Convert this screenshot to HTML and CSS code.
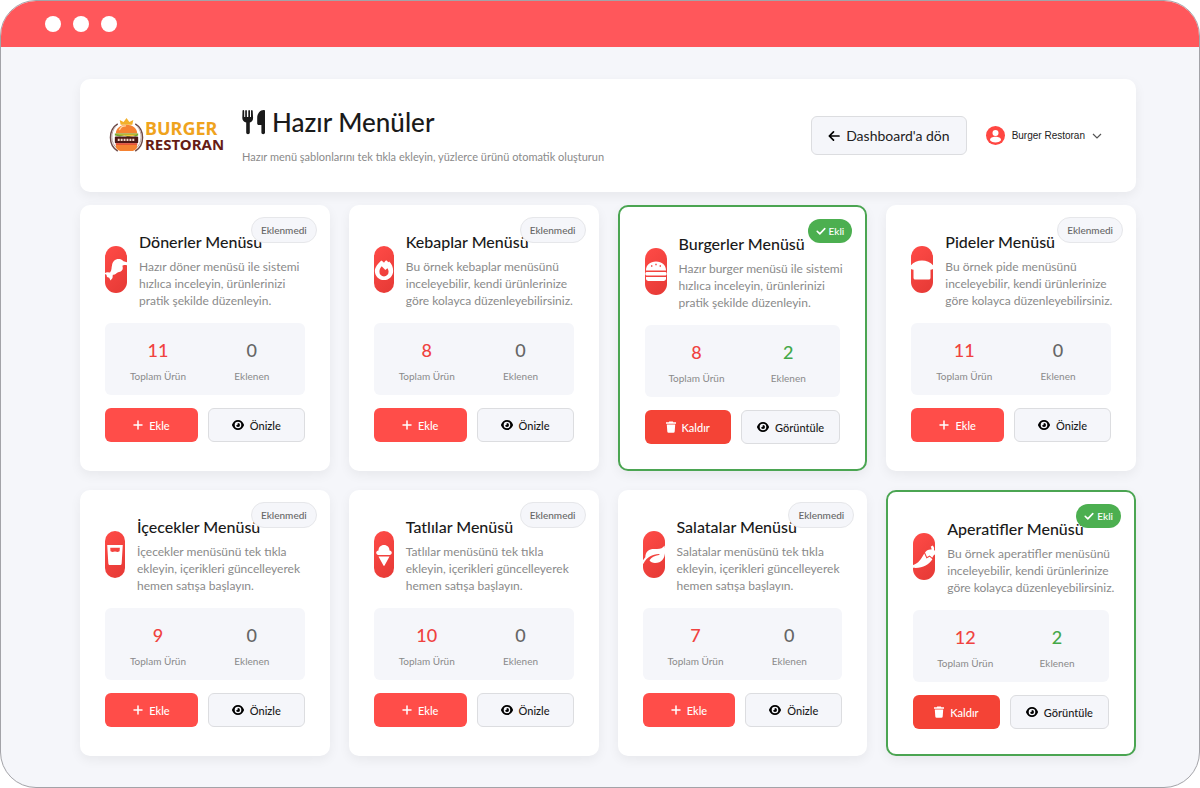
FILE: index.html
```
<!DOCTYPE html>
<html lang="tr">
<head>
    <meta charset="UTF-8">
    <meta name="viewport" content="width=device-width, initial-scale=1.0">
    <title>Hazır Menüler</title>
    <link rel="stylesheet" href="styles.css">
</head>
<body>
    <svg class="sprite" aria-hidden="true">
        <symbol id="plus" viewBox="0 0 10 10"><path d="M5 1v8M1 5h8" stroke="currentColor" stroke-width="1.5" stroke-linecap="round"/></symbol>
        <symbol id="eye" viewBox="0 0 12 12"><path fill="currentColor" fill-rule="evenodd" d="M6 1C3.200 1 1.100 3 .1 5.500a1.200 1.200 0 0 0 0 1C1.100 9 3.200 11 6 11s4.900-2 5.900-4.500a1.200 1.200 0 0 0 0-1C10.900 3 8.800 1 6 1zm0 1.700a3.300 3.300 0 1 1 0 6.600 3.300 3.300 0 0 1 0-6.600z"/><path fill="currentColor" d="M6 4a2 2 0 1 1-2 2.200c1 .3 2-.7 1.600-1.800L6 4z"/></symbol>
        <symbol id="trash" viewBox="0 0 10 12"><path fill="currentColor" d="M3.200.5h3.600l.5.800H10v1.500H0V1.300h2.700zM.8 3.500h8.400l-.5 7a1.300 1.300 0 0 1-1.300 1.200H2.600a1.300 1.300 0 0 1-1.300-1.200z"/></symbol>
        <symbol id="check" viewBox="0 0 10 10"><path d="M1.200 5.300l2.600 2.600 5-5.300" fill="none" stroke="currentColor" stroke-width="1.600" stroke-linecap="round" stroke-linejoin="round"/></symbol>
    </svg>

    <div class="window">
        <div class="titlebar">
            <span class="dot"></span>
            <span class="dot"></span>
            <span class="dot"></span>
        </div>

        <main class="content">
            <header class="page-header">
                <div class="logo">
                    <svg class="logo-mark" viewBox="0 0 36 38" aria-hidden="true">
                        <path d="M12 8 11 3l4 2 3-4 3 4 4-2-1 5z" fill="#f2b02c"/>
                        <path d="M9 7C-1 13-1 29 9 35M27 7c10 6 10 22 0 28" fill="none" stroke="#6d4a48" stroke-width="1.500"/>
                        <path d="M7 9.500C1 16 2 27 8 32M29 9.500c6 6.500 5 17.500-1 22.500" fill="none" stroke="#b9a5a3" stroke-width="1"/>
                        <path d="M7 17C7 5 29 5 29 17z" fill="#f58232"/>
                        <path d="M11 13c1-3 4-4 6-4" fill="none" stroke="#ffd9a6" stroke-width="1.300" stroke-linecap="round"/>
                        <path d="M6 17h24v2l-3 1-3-1-4 2-4-2-5 1-5-1z" fill="#74a72f"/>
                        <path d="M7 18h22l-6 2z" fill="#fac63b"/>
                        <rect x="6" y="20" width="24" height="7" rx="1" fill="#4c1815"/>
                        <path d="M9 23.500h18" fill="none" stroke="#f6ddcf" stroke-width="2.500" stroke-dasharray="2 1"/>
                        <path d="M7 28h22v2c0 3-3 5-6 5H13c-3 0-6-2-6-5z" fill="#f58232"/>
                        <path d="M7 27h22v1.500H7z" fill="#e33c26"/>
                    </svg>
                    <div class="logo-text">
                        <span class="logo-top">BURGER</span>
                        <span class="logo-bottom">RESTORAN</span>
                    </div>
                </div>
                <div class="heading">
                    <h1>
                        <svg class="cutlery" viewBox="0 0 24 26" aria-hidden="true"><path fill="currentColor" d="M1.300 1c.6 0 .9.400.9.900v6h1V2c0-1.300 1.700-1.300 1.700 0v5.900h1.400V2c0-1.300 1.700-1.300 1.700 0v5.900h1V1.900c0-1.200 1.600-1.200 1.700 0l.4 7.100c0 2.500-1.500 4-3.300 4.500v10c0 2.300-3.600 2.300-3.600 0v-10C2.100 13 .3 11.500.3 9L.5 1.900c0-.5.300-.9.800-.9zM23 1.800v21.700c0 2.200-3.600 2.200-3.600 0V16h-2.600c-1 0-1.600-.6-1.600-1.500V9c0-4.500 3-8 6.500-8 .8 0 1.300.200 1.300.8z"/></svg>
                        Hazır Menüler
                    </h1>
                    <p>Hazır menü şablonlarını tek tıkla ekleyin, yüzlerce ürünü otomatik oluşturun</p>
                </div>
                <a class="back" href="#">
                    <svg width="12" height="12" viewBox="0 0 12 12" aria-hidden="true"><path d="M11 6H1.500M5.500 1.800 1.300 6l4.200 4.200" fill="none" stroke="#000" stroke-width="1.700" stroke-linecap="round" stroke-linejoin="round"/></svg>
                    Dashboard'a dön
                </a>
                <button class="user" type="button">
                    <svg width="19" height="19" viewBox="0 0 19 19" aria-hidden="true"><circle cx="9.500" cy="9.500" r="9.500" fill="#ff4742"/><circle cx="9.500" cy="7" r="3" fill="#fff"/><path d="M4 14.200c0-2.400 2.500-3.400 5.500-3.400s5.500 1 5.500 3.400c-1.400 1.500-3.300 2.200-5.500 2.200S5.400 15.700 4 14.200z" fill="#fff"/></svg>
                    Burger Restoran
                    <svg width="10" height="6" viewBox="0 0 10 6" aria-hidden="true"><path d="M1 1l4 4 4-4" fill="none" stroke="#555" stroke-width="1.200"/></svg>
                </button>
            </header>

            <div class="menus">
                <article class="card">
                    <span class="badge">Eklenmedi</span>
                    <div class="card-head">
                        <div class="card-icon"><svg viewBox="0 0 24 24" aria-hidden="true"><path d="M0 15.300 3 14.200l3 .3C8 12 7.300 9.500 8 7.500 8.500 3.500 11 1 14.500 1c2 0 3.500.5 5 2.300L24 4.500l-1 2.700c-2 0-3.500-.6-4.600.6.600 2 .6 4-1 5.200-1.500 1.300-3.500.700-4.900 2.200-1.200 1.300-2.500 1.300-3.700 1.600L8.500 20l-2 2.500-1.300-2.800L3 19l-.5-2.200z"/></svg></div>
                        <div>
                            <h2>Dönerler Menüsü</h2>
                            <p>Hazır döner menüsü ile sistemi<br>hızlıca inceleyin, ürünlerinizi<br>pratik şekilde düzenleyin.</p>
                        </div>
                    </div>
                    <dl class="stats">
                        <div><dt>Toplam Ürün</dt><dd class="total">11</dd></div>
                        <div><dt>Eklenen</dt><dd>0</dd></div>
                    </dl>
                    <div class="actions">
                        <button class="btn add" type="button"><svg class="i-plus"><use href="#plus"/></svg>Ekle</button>
                        <button class="btn view" type="button"><svg class="i-eye"><use href="#eye"/></svg>Önizle</button>
                    </div>
                </article>

                <article class="card">
                    <span class="badge">Eklenmedi</span>
                    <div class="card-head">
                        <div class="card-icon narrow"><svg viewBox="0 0 24 24" aria-hidden="true"><path fill-rule="evenodd" d="M9 1.500c1.300.5 2.200 1.400 3 2.500.7-1.200 1.500-2 2.400-2.700 1 .6 1.700 1.400 2.300 2.300l1-.8C20.500 5.500 22 9 22 13c0 5.500-4.400 10-10 10S2 18.500 2 13c0-4 3.500-8 7-11.500zM9.500 8C8 9.800 7 11.800 7 14c0 3 2.200 5 5 5s5-2 5-5c0-1.500-.5-3-1.300-4L13.500 12z"/></svg></div>
                        <div>
                            <h2>Kebaplar Menüsü</h2>
                            <p>Bu örnek kebaplar menüsünü<br>inceleyebilir, kendi ürünlerinize<br>göre kolayca düzenleyebilirsiniz.</p>
                        </div>
                    </div>
                    <dl class="stats">
                        <div><dt>Toplam Ürün</dt><dd class="total">8</dd></div>
                        <div><dt>Eklenen</dt><dd>0</dd></div>
                    </dl>
                    <div class="actions">
                        <button class="btn add" type="button"><svg class="i-plus"><use href="#plus"/></svg>Ekle</button>
                        <button class="btn view" type="button"><svg class="i-eye"><use href="#eye"/></svg>Önizle</button>
                    </div>
                </article>

                <article class="card added">
                    <span class="badge"><svg class="i-check"><use href="#check"/></svg>Ekli</span>
                    <div class="card-head">
                        <div class="card-icon"><svg viewBox="0 0 24 24" aria-hidden="true"><path fill-rule="evenodd" d="M2 10.500C2 5 6 1.500 12 1.500S22 5 22 10.500zM7 5.300v1.400h1.400V5.300zm4.300-1.500v1.400h1.400V3.800zm4.300 1.500v1.400H17V5.300z"/><rect x="1.500" y="12" width="21" height="3.500" rx="1.200"/><path d="M2 17h20v1.500c0 1.600-1 2.500-2.500 2.500h-15C3 21 2 20.100 2 18.500z"/></svg></div>
                        <div>
                            <h2>Burgerler Menüsü</h2>
                            <p>Hazır burger menüsü ile sistemi<br>hızlıca inceleyin, ürünlerinizi<br>pratik şekilde düzenleyin.</p>
                        </div>
                    </div>
                    <dl class="stats">
                        <div><dt>Toplam Ürün</dt><dd class="total">8</dd></div>
                        <div><dt>Eklenen</dt><dd>2</dd></div>
                    </dl>
                    <div class="actions">
                        <button class="btn remove" type="button"><svg class="i-trash"><use href="#trash"/></svg>Kaldır</button>
                        <button class="btn view" type="button"><svg class="i-eye"><use href="#eye"/></svg>Görüntüle</button>
                    </div>
                </article>

                <article class="card">
                    <span class="badge">Eklenmedi</span>
                    <div class="card-head">
                        <div class="card-icon"><svg viewBox="0 0 24 24" aria-hidden="true"><path d="M0 9C2 4.500 7 2.500 12 2.500S22 4.500 24 9c0 2-1.500 2.700-3.500 2.700v8c0 1.200-.7 1.800-1.800 1.800H5.300c-1.100 0-1.800-.6-1.800-1.800v-8C1.500 11.700 0 11 0 9z"/></svg></div>
                        <div>
                            <h2>Pideler Menüsü</h2>
                            <p>Bu örnek pide menüsünü<br>inceleyebilir, kendi ürünlerinize<br>göre kolayca düzenleyebilirsiniz.</p>
                        </div>
                    </div>
                    <dl class="stats">
                        <div><dt>Toplam Ürün</dt><dd class="total">11</dd></div>
                        <div><dt>Eklenen</dt><dd>0</dd></div>
                    </dl>
                    <div class="actions">
                        <button class="btn add" type="button"><svg class="i-plus"><use href="#plus"/></svg>Ekle</button>
                        <button class="btn view" type="button"><svg class="i-eye"><use href="#eye"/></svg>Önizle</button>
                    </div>
                </article>

                <article class="card">
                    <span class="badge">Eklenmedi</span>
                    <div class="card-head">
                        <div class="card-icon narrow"><svg viewBox="0 0 24 24" aria-hidden="true"><path fill-rule="evenodd" d="M3.500 1h17l-1.200 20c-.1 1.500-.8 2-2 2H6.700c-1.200 0-1.900-.5-2-2zM6.800 4l.3 4 2 .8 2.900-.6 3 .6 2-.8.300-4z"/></svg></div>
                        <div>
                            <h2>İçecekler Menüsü</h2>
                            <p>İçecekler menüsünü tek tıkla<br>ekleyin, içerikleri güncelleyerek<br>hemen satışa başlayın.</p>
                        </div>
                    </div>
                    <dl class="stats">
                        <div><dt>Toplam Ürün</dt><dd class="total">9</dd></div>
                        <div><dt>Eklenen</dt><dd>0</dd></div>
                    </dl>
                    <div class="actions">
                        <button class="btn add" type="button"><svg class="i-plus"><use href="#plus"/></svg>Ekle</button>
                        <button class="btn view" type="button"><svg class="i-eye"><use href="#eye"/></svg>Önizle</button>
                    </div>
                </article>

                <article class="card">
                    <span class="badge">Eklenmedi</span>
                    <div class="card-head">
                        <div class="card-icon narrow"><svg viewBox="0 0 24 24" aria-hidden="true"><path d="M6 7c0-3.500 2.500-6 6-6s6 2.500 6 6c1.500.3 2.500 1.200 2.500 2.500S19.500 12 18 12H6c-1.500 0-2.500-1.200-2.500-2.500S4.500 7.300 6 7zM6 13.500h12L12.600 23.500c-.3.500-.9.500-1.200 0z"/></svg></div>
                        <div>
                            <h2>Tatlılar Menüsü</h2>
                            <p>Tatlılar menüsünü tek tıkla<br>ekleyin, içerikleri güncelleyerek<br>hemen satışa başlayın.</p>
                        </div>
                    </div>
                    <dl class="stats">
                        <div><dt>Toplam Ürün</dt><dd class="total">10</dd></div>
                        <div><dt>Eklenen</dt><dd>0</dd></div>
                    </dl>
                    <div class="actions">
                        <button class="btn add" type="button"><svg class="i-plus"><use href="#plus"/></svg>Ekle</button>
                        <button class="btn view" type="button"><svg class="i-eye"><use href="#eye"/></svg>Önizle</button>
                    </div>
                </article>

                <article class="card">
                    <span class="badge">Eklenmedi</span>
                    <div class="card-head">
                        <div class="card-icon"><svg viewBox="0 0 24 24" aria-hidden="true"><path d="M22.500 2.500C24 9 23.500 20 13 20c-2.500 0-4.500-1-5.500-2.800C9.500 14 12.500 12.800 17 11.900c.8-.2.600-.8 0-.8-7 .4-12 2.900-15.500 9.400-.8 1.500-2.300.3-1.600-1.200.9-2 2-3.600 3.400-5C3.500 8.500 7 6 12 6h3c3.500 0 6-1 7.500-3.500z"/></svg></div>
                        <div>
                            <h2>Salatalar Menüsü</h2>
                            <p>Salatalar menüsünü tek tıkla<br>ekleyin, içerikleri güncelleyerek<br>hemen satışa başlayın.</p>
                        </div>
                    </div>
                    <dl class="stats">
                        <div><dt>Toplam Ürün</dt><dd class="total">7</dd></div>
                        <div><dt>Eklenen</dt><dd>0</dd></div>
                    </dl>
                    <div class="actions">
                        <button class="btn add" type="button"><svg class="i-plus"><use href="#plus"/></svg>Ekle</button>
                        <button class="btn view" type="button"><svg class="i-eye"><use href="#eye"/></svg>Önizle</button>
                    </div>
                </article>

                <article class="card added">
                    <span class="badge"><svg class="i-check"><use href="#check"/></svg>Ekli</span>
                    <div class="card-head">
                        <div class="card-icon"><svg viewBox="0 0 24 24" aria-hidden="true"><path d="M20.500.5c1.500 1 1.800 2.700 1.500 4.500 2 1.300 3 3.500 2.500 6l-2.300-1.500-2 3.200-2.500-2.300L15 12l-2-4.500C14.500 5 17 4 19.500 4.500c.2-1.300-.3-2-.8-2.700zM12.300 8.500l2.200 5 3.200-1.700 2.700 2.500C17 20 10 23.500 1.500 22.800c-1.500-.1-2-2.300-.3-2.800C6.500 18.500 9 14 12.300 8.500z"/></svg></div>
                        <div>
                            <h2>Aperatifler Menüsü</h2>
                            <p>Bu örnek aperatifler menüsünü<br>inceleyebilir, kendi ürünlerinize<br>göre kolayca düzenleyebilirsiniz.</p>
                        </div>
                    </div>
                    <dl class="stats">
                        <div><dt>Toplam Ürün</dt><dd class="total">12</dd></div>
                        <div><dt>Eklenen</dt><dd>2</dd></div>
                    </dl>
                    <div class="actions">
                        <button class="btn remove" type="button"><svg class="i-trash"><use href="#trash"/></svg>Kaldır</button>
                        <button class="btn view" type="button"><svg class="i-eye"><use href="#eye"/></svg>Görüntüle</button>
                    </div>
                </article>
            </div>
        </main>
    </div>
</body>
</html>
```
FILE: styles.css
```
* {
    box-sizing: border-box;
}

body {
    margin: 0;
    background: white;
    font-family: Lato, "Open Sans", sans-serif;
    color: #1a1a1a;
}

h1, h2, p, dl, dd {
    margin: 0;
}

.sprite {
    display: none;
}

.window {
    min-height: 100vh;
    border: 1px solid #a3a3a8;
    border-radius: 36px;
    overflow: hidden;
    background: #f5f6fa;
}

.titlebar {
    display: flex;
    align-items: center;
    gap: 12px;
    height: 46px;
    padding-left: 44px;
    background: #ff575b;
}

.dot {
    width: 16px;
    height: 16px;
    border-radius: 50%;
    background: white;
}

.content {
    padding: 32px 63px 30px 79px;
}

/* Header */
.page-header {
    display: flex;
    align-items: center;
    min-height: 113px;
    margin-bottom: 13px;
    padding: 0 34px 0 29px;
    background: white;
    border-radius: 10px;
    box-shadow: 0 4px 12px rgba(0, 0, 0, 0.06);
}

.logo {
    display: flex;
    align-items: center;
    gap: 1px;
    width: 117px;
    margin-right: 16px;
}

.logo-mark {
    flex: none;
    width: 35px;
    height: 37px;
}

.logo-text {
    display: flex;
    flex-direction: column;
    font-family: "Noto Sans", sans-serif;
    font-weight: 700;
}

.logo-top {
    font-size: 18px;
    line-height: 18px;
    color: #efa31d;
}

.logo-bottom {
    font-size: 15px;
    line-height: 15px;
    color: #651c16;
}

.heading {
    flex: 1;
}

h1 {
    display: flex;
    align-items: center;
    gap: 6px;
    font-size: 26px;
    font-weight: 500;
    line-height: 32px;
}

.cutlery {
    width: 24px;
    height: 26px;
}

.heading p {
    margin-top: 10px;
    font-size: 11px;
    line-height: 18px;
    color: #8a8a8a;
}

.back {
    display: flex;
    align-items: center;
    gap: 6px;
    height: 39px;
    padding: 0 16px;
    border: 1px solid #dcdde0;
    border-radius: 6px;
    background: #f5f6fa;
    color: #222;
    font-size: 14px;
    text-decoration: none;
}

.user {
    display: flex;
    align-items: center;
    gap: 7px;
    margin-left: 19px;
    padding: 0;
    border: none;
    background: none;
    color: #222;
    font-family: "Liberation Sans", Arial, sans-serif;
    font-size: 10px;
    cursor: pointer;
}

/* Menu cards */
.menus {
    display: grid;
    grid-template-columns: repeat(4, 1fr);
    gap: 19px;
}

.card {
    position: relative;
    min-width: 0;
    padding: 25px;
    background: white;
    border-radius: 10px;
    box-shadow: 0 4px 12px rgba(0, 0, 0, 0.06);
}

.card.added {
    border: 2px solid #4ba552;
}

.badge {
    position: absolute;
    top: 12px;
    right: 13px;
    display: flex;
    align-items: center;
    gap: 3px;
    height: 26px;
    padding: 0 9px;
    border: 1px solid #e6e7ea;
    border-radius: 13px;
    background: #f5f6fa;
    color: #666;
    font-size: 10px;
    font-weight: 500;
}

.added .badge {
    height: 24px;
    padding: 0 8px;
    border: none;
    background: #4caf50;
    color: white;
}

.card-head {
    display: flex;
    align-items: center;
    gap: 12px;
    margin-bottom: 14px;
    white-space: nowrap;
}

.card-icon {
    display: flex;
    flex: none;
    align-items: center;
    justify-content: center;
    width: 22px;
    height: 47px;
    border-radius: 11px;
    overflow: hidden;
    background: linear-gradient(135deg, #ff4b47, #e53935);
}

.card-icon.narrow {
    width: 20px;
}

.card-icon svg {
    flex: none;
    width: 24px;
    height: 24px;
    fill: white;
}

.card-icon.narrow svg {
    width: 22px;
    height: 22px;
}

h2 {
    margin-bottom: 4px;
    font-size: 16px;
    font-weight: 500;
    line-height: 24px;
}

.card-head p {
    font-size: 12px;
    line-height: 17px;
    color: #8a8a8a;
}

.stats {
    display: grid;
    grid-template-columns: 1fr 1fr;
    gap: 12px;
    margin-bottom: 13px;
    padding: 14px 12px 12px;
    border-radius: 6px;
    background: #f5f6fa;
}

.stats div {
    display: flex;
    flex-direction: column-reverse;
    gap: 6px;
    text-align: center;
}

dt {
    font-size: 10px;
    line-height: 14px;
    color: #8a8a8a;
}

dd {
    font-size: 18px;
    font-weight: 500;
    line-height: 26px;
    color: #666;
}

.added dd {
    color: #43a848;
}

.stats .total {
    color: #f0423f;
}

.actions {
    display: grid;
    grid-template-columns: 93fr 97fr;
    gap: 10px;
}

.added .actions {
    grid-template-columns: 87fr 100fr;
}

.btn {
    display: flex;
    align-items: center;
    justify-content: center;
    gap: 6px;
    height: 34px;
    padding: 0;
    border: none;
    border-radius: 6px;
    color: white;
    font-family: inherit;
    font-size: 11px;
    font-weight: 500;
    cursor: pointer;
}

.add {
    background: #ff4d49;
}

.remove {
    background: #f44336;
}

.view {
    border: 1px solid #dcdde0;
    background: #f5f6fa;
    color: #1a1a1a;
}

.i-plus, .i-check {
    width: 10px;
    height: 10px;
}

.i-eye {
    width: 12px;
    height: 12px;
    color: black;
}

.i-trash {
    width: 10px;
    height: 12px;
}
```
